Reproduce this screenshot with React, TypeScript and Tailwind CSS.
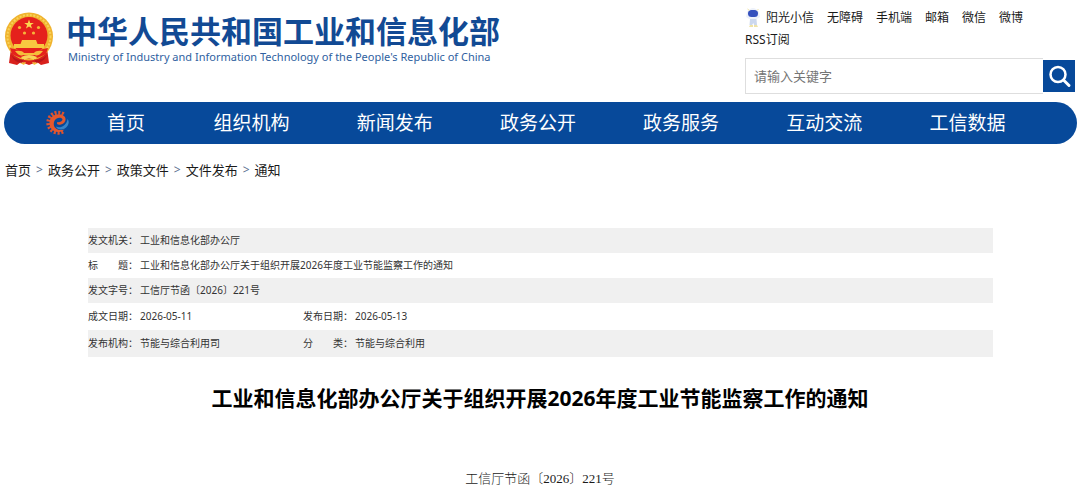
import { FC } from 'react';

interface IMetaItem {
  label: string;
  value: string;
}

const topLinks = ['无障碍', '手机端', '邮箱', '微信', '微博', 'RSS订阅'];

const navItems = ['组织机构', '新闻发布', '政务公开', '政务服务', '互动交流', '工信数据'];

const breadcrumbs = ['首页', '政务公开', '政策文件', '文件发布', '通知'];

const metaRows: IMetaItem[][] = [
  [{ label: '发文机关：', value: '工业和信息化部办公厅' }],
  [
    {
      label: '标　　题：',
      value: '工业和信息化部办公厅关于组织开展2026年度工业节能监察工作的通知',
    },
  ],
  [{ label: '发文字号：', value: '工信厅节函〔2026〕221号' }],
  [
    { label: '成文日期：', value: '2026-05-11' },
    { label: '发布日期：', value: '2026-05-13' },
  ],
  [
    { label: '发布机构：', value: '节能与综合利用司' },
    { label: '分　　类：', value: '节能与综合利用' },
  ],
];

const Emblem: FC = () => (
  <svg viewBox="0 0 50 54" className="h-[54px] w-[50px] shrink-0" aria-hidden="true">
    <path d="M7 36 L5 51 L13 53 L17 50 L25 53 L33 50 L37 53 L45 51 L43 36 Z" fill="#d8201c" />
    <circle cx="25" cy="24.5" r="24" fill="#f0b32e" />
    <circle cx="25" cy="24.5" r="21.5" fill="none" stroke="#f8d258" strokeWidth="2" strokeDasharray="2 1.5" />
    <circle cx="25" cy="23.5" r="18.5" fill="#e5211c" />
    <path
      d="M25 7.5 L26.2 11 L29.8 11 L26.9 13.1 L28 16.6 L25 14.5 L22 16.6 L23.1 13.1 L20.2 11 L23.8 11 Z"
      fill="#fbd850"
    />
    <g fill="#f6b53a">
      <circle cx="15.5" cy="15.5" r="1.6" />
      <circle cx="34.5" cy="15.5" r="1.6" />
      <circle cx="20.5" cy="21" r="1.6" />
      <circle cx="29.5" cy="21" r="1.6" />
    </g>
    <path d="M18 28 H32 L33.5 32 H40 L40 36 H10 L10 32 H16.5 Z" fill="#f8c840" />
    <path d="M6 36 Q25 41 44 36 L42 42 Q25 52 8 42 Z" fill="#e5211c" />
    <path d="M11 39 Q18 38 20 41 H30 Q32 38 39 39 Q34 45 31 43 H19 Q16 45 11 39 Z" fill="#f5bd3a" />
    <path d="M17 45 Q25 41 33 45 L31 48 Q25 45 19 48 Z" fill="#f8d258" />
    <path d="M7 43 Q14 50 20 47 L18 51 Q11 51 7 43 Z" fill="#b9141a" />
    <path d="M43 43 Q36 50 30 47 L32 51 Q39 51 43 43 Z" fill="#b9141a" />
    <path d="M16 51 L22 50 L20 53 Z M34 51 L28 50 L30 53 Z" fill="#f5bd3a" />
  </svg>
);

const Mascot: FC = () => (
  <svg viewBox="0 0 16 22" className="h-[22px] w-4 shrink-0" aria-hidden="true">
    <path d="M2 5 Q8 -3 14 5 L15 10 Q8 16 1 10 Z" fill="#edf1fa" />
    <rect x="3" y="3" width="10" height="7" rx="3.5" fill="#3450bd" />
    <path d="M5 12 H11.5 L12 18 H9.2 L8.2 16 L7.2 18 H4.5 Z" fill="#ccd8ee" />
    <path d="M5 18 H8 V20 H4 Z M9 18 H12 L13 20 H9 Z" fill="#efe3a8" />
    <path d="M2.5 2 L4.5 3.5 M13.5 2 L12 3.5" stroke="#efe3a8" />
  </svg>
);

// gear on the left, blue tail sweeping through the middle of the letter
const NavLogo: FC = () => (
  <svg viewBox="0 0 28 28" className="h-7 w-7 shrink-0" aria-hidden="true">
    <path
      d="M19 22.5 A10 10 0 1 1 20 5.5"
      fill="none"
      stroke="#dc532f"
      strokeWidth="4"
      strokeDasharray="2 1.6"
    />
    <path
      d="M20.5 20.5 C14 26 5.5 22 5.5 14 C5.5 7 13 3.5 18.5 6 C23 8 22.5 14 17 15.5 C13.5 16.5 12 14.5 13.5 13 C15 13.5 18.5 12.5 18.5 10.5 C18 8 11.5 8 10 13 C8.5 19 14 22.5 20.5 20.5 Z"
      fill="#e5582d"
    />
    <path
      d="M12 17.5 C16 20 23 16.5 23.5 10 C27 14 22.5 20.5 17 20.5 C14.5 20.5 12.5 19.5 12 17.5 Z"
      fill="#3a84c8"
    />
  </svg>
);

const SearchIcon: FC = () => (
  <svg viewBox="0 0 32 32" className="h-8 w-8" fill="none" stroke="#fff" aria-hidden="true">
    <circle cx="15" cy="14.5" r="7.5" strokeWidth="2.5" />
    <path d="M20.5 20 L26 25.5" strokeWidth="3" strokeLinecap="round" />
  </svg>
);

const Header: FC = () => (
  <header className="flex items-start justify-between pl-1 pr-[5px]">
    <a href="#" className="mt-3 flex items-start gap-3 text-[#124a94]">
      <Emblem />
      <div className="whitespace-nowrap">
        <div className="text-[31px] font-bold leading-[38px]">中华人民共和国工业和信息化部</div>
        <div className="pl-0.5 text-[11px] leading-[14px] text-[#2f5f9f]">
          Ministry of Industry and Information Technology of the People's Republic of China
        </div>
      </div>
    </a>

    <div className="mt-[7px] w-[330px] shrink-0">
      <div className="flex flex-wrap gap-x-[13px] text-xs leading-[22px]">
        <a href="#" className="flex gap-[5px]">
          <Mascot />
          阳光小信
        </a>
        {topLinks.map((item) => (
          <a key={item} href="#">
            {item}
          </a>
        ))}
      </div>
      <form className="mt-[7px] flex items-center">
        <input
          type="text"
          aria-label="请输入关键字"
          placeholder="请输入关键字"
          className="h-9 min-w-0 flex-1 border border-r-0 border-[#dedede] px-2 text-[13px] outline-none placeholder:text-[#757575]"
        />
        <button type="button" aria-label="搜索" className="bg-[#07499a]">
          <SearchIcon />
        </button>
      </form>
    </div>
  </header>
);

const Nav: FC = () => (
  <nav className="ml-1 mr-[3px] mt-2 flex h-[42px] items-center rounded-full bg-[#07499a] pl-10 pr-[38px] text-[19px] text-white">
    <NavLogo />
    <a href="#" className="w-[108px] text-center">
      首页
    </a>
    {navItems.map((item) => (
      <a key={item} href="#" className="flex-1 text-center">
        {item}
      </a>
    ))}
  </nav>
);

const App: FC = () => {
  return (
    <div className="bg-white font-['Noto_Sans','Noto_Sans_CJK_SC',sans-serif] text-[#1a1a1a]">
      <Header />
      <Nav />

      <div className="mt-4 flex gap-[5px] px-[5px] text-[13px] leading-5">
        {breadcrumbs.map((item, index) => (
          <div key={item} className="flex gap-[5px]">
            {index > 0 ? <span className="text-xs leading-5 text-[#5b6f8f]">&gt;</span> : null}
            <a href="#">{item}</a>
          </div>
        ))}
      </div>

      <main>
        <table className="ml-[88px] mt-12 w-[calc(100%-175px)] table-fixed text-left text-[10px] text-[#333]">
          <colgroup>
            <col className="w-[52px]" />
            <col className="w-[163px]" />
            <col className="w-[52px]" />
            <col />
          </colgroup>
          <tbody>
            {metaRows.map((row) => (
              <tr
                key={row[0].label}
                className={`odd:bg-[#f0f0f0] ${row.length > 1 ? 'h-[27px]' : 'h-[25px]'}`}
              >
                {row.map((item) => [
                  <th key={item.label} scope="row" className="whitespace-nowrap font-normal">
                    {item.label}
                  </th>,
                  <td key={item.value} colSpan={row.length === 1 ? 3 : 1}>
                    {item.value}
                  </td>,
                ])}
              </tr>
            ))}
          </tbody>
        </table>

        <h1 className="mt-[25px] text-center text-[21px] font-bold leading-8 text-black">
          工业和信息化部办公厅关于组织开展2026年度工业节能监察工作的通知
        </h1>
        <p className="mt-[55px] text-center font-['Liberation_Serif','Noto_Sans_CJK_SC',serif] text-[13px] font-light leading-5">
          工信厅节函〔2026〕221号
        </p>
      </main>
    </div>
  );
};

export default App;
